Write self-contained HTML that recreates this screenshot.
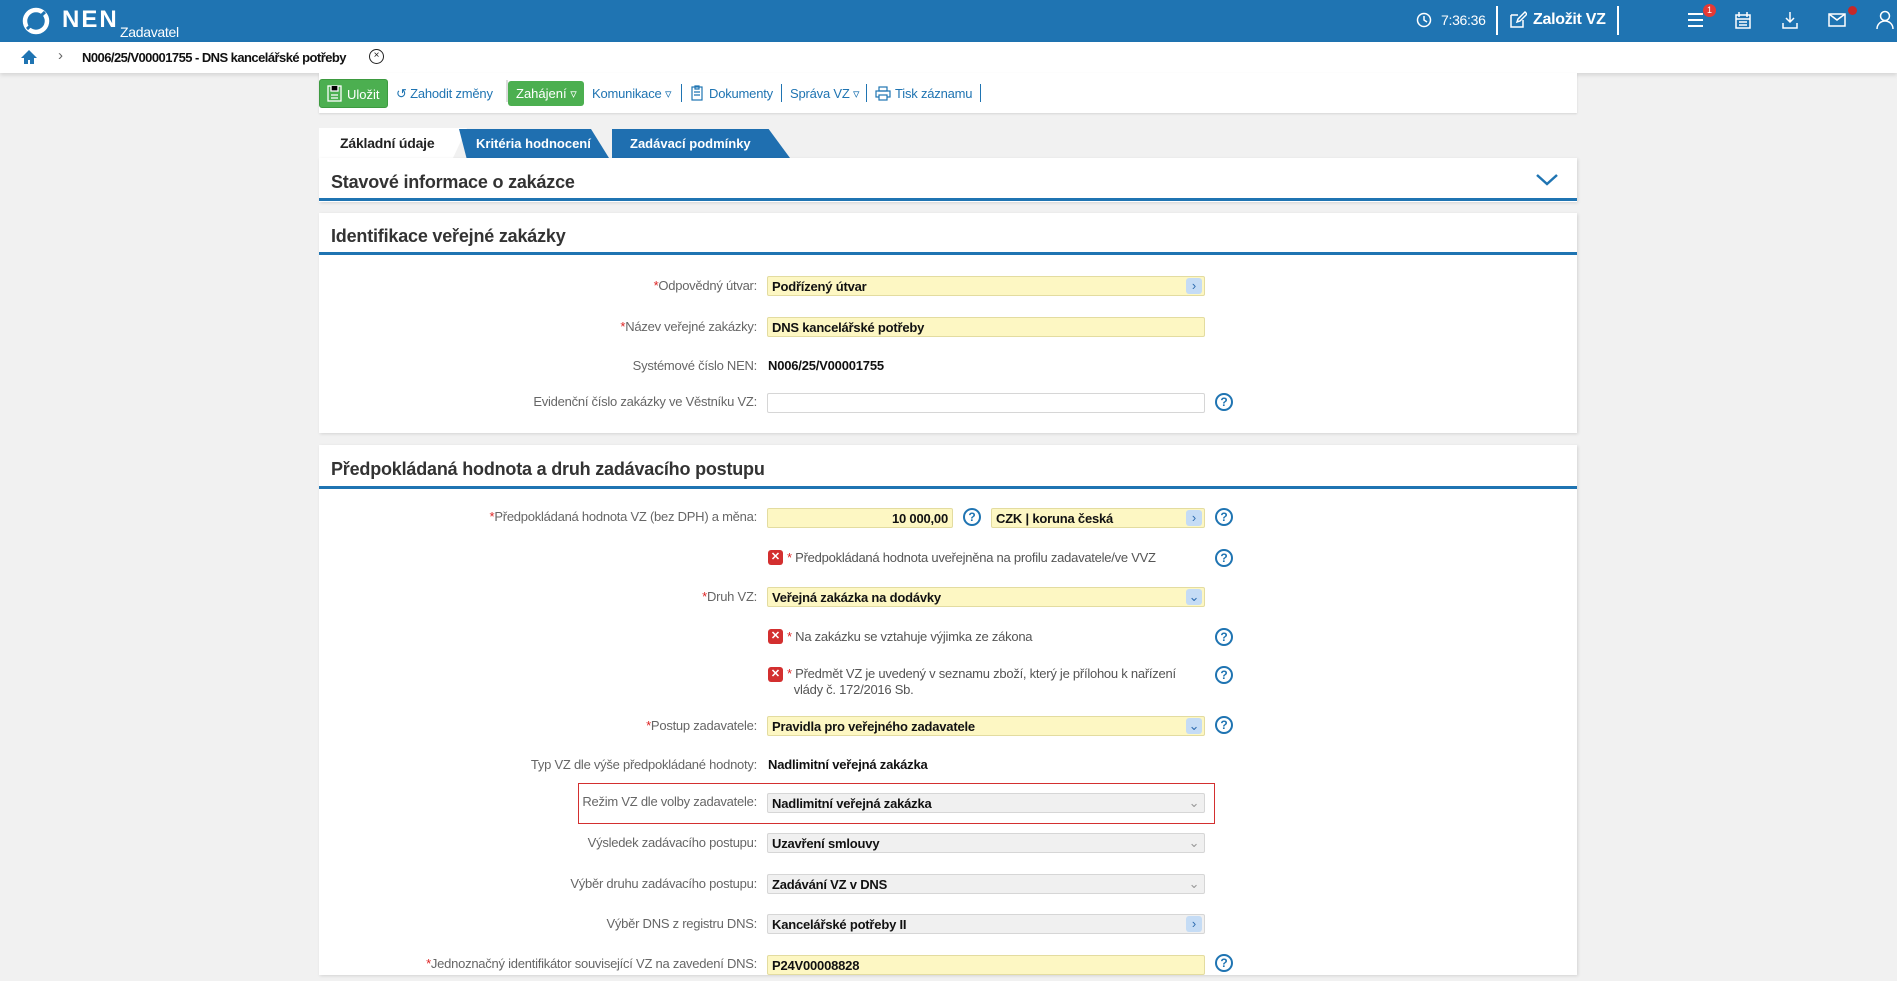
<!DOCTYPE html>
<html><head><meta charset="utf-8"><style>
*{box-sizing:border-box;margin:0;padding:0}
body{width:1897px;height:981px;overflow:hidden;background:#f1f1f1;font-family:"Liberation Sans",sans-serif;position:relative;color:#222}
.a{position:absolute}
.hdr{left:0;top:0;width:1897px;height:42px;background:#1f74b2;color:#fff}
.bc{left:0;top:42px;width:1897px;height:31px;background:#fff;box-shadow:0 2px 4px rgba(0,0,0,.12)}
.panel{background:#fff;box-shadow:1px 1px 3px rgba(0,0,0,.12);left:319px;width:1258px}
.ttl{font-size:18px;font-weight:bold;color:#333;left:12px;letter-spacing:-0.2px}
.line{left:0;width:1258px;height:3px;background:#1f74b2}
.lbl{font-size:13px;color:#666;text-align:right;width:480px;left:277px;white-space:nowrap;letter-spacing:-0.25px}
.lbl b{color:#d22;font-weight:normal}
.f{height:20px;border:1px solid #e3dca0;background:#fdf7c3;border-radius:2px;font-size:13px;font-weight:bold;padding:2px 4px;color:#111;white-space:nowrap;letter-spacing:-0.2px}
.g{background:#f0f0f0;border-color:#d6d6d6}
.w{background:#fff;border-color:#d6d6d6}
.btn{position:absolute;right:2px;top:1px;width:16px;height:16px;background:#c5dcf5;border-radius:3px;color:#2f6db0;font-size:13px;text-align:center;line-height:15px;font-weight:normal}
.btn.n{background:none;color:#999}
.q{width:18px;height:18px;border:2px solid #1f74b2;border-radius:50%;color:#1f74b2;font-size:12px;font-weight:bold;text-align:center;line-height:14px}
.x{width:15px;height:15px;background:#d32f2f;border-radius:3px;color:#fff;font-size:11px;font-weight:bold;text-align:center;line-height:15px}
.ct{font-size:13px;color:#555;letter-spacing:-0.25px}
.ct b{color:#d22;font-weight:normal}
.val{font-size:13px;font-weight:bold;color:#111;letter-spacing:-0.2px}
.tb{font-size:13px;color:#1f74b2;top:86px;letter-spacing:-0.2px}
</style></head><body>
<div class="a hdr">
 <svg class="a" style="left:22px;top:7px" width="28" height="28" viewBox="0 0 28 28"><circle cx="14" cy="14" r="11" fill="none" stroke="#fff" stroke-width="4.5"/><path d="M5 22 L23 5" stroke="#1f74b2" stroke-width="3"/></svg>
 <div class="a" style="left:62px;top:6px;font-size:24px;font-weight:bold;letter-spacing:2px">NEN</div>
 <div class="a" style="left:120px;top:24px;font-size:14px;letter-spacing:-0.3px">Zadavatel</div>
 <svg class="a" style="left:1416px;top:12px" width="16" height="16"><circle cx="8" cy="8" r="6.5" fill="none" stroke="#fff" stroke-width="1.5"/><path d="M8 4v4l3 2" stroke="#fff" fill="none" stroke-width="1.5"/></svg>
 <div class="a" style="left:1441px;top:12px;font-size:14px;letter-spacing:-0.3px">7:36:36</div>
 <div class="a" style="left:1496px;top:6px;width:2px;height:29px;background:#fff"></div>
 <svg class="a" style="left:1509px;top:11px" width="18" height="18"><path d="M2 4h7M2 4v12h12v-7M8 11l1-3 7-7 2 2-7 7z" stroke="#fff" fill="none" stroke-width="1.5"/></svg>
 <div class="a" style="left:1533px;top:11px;font-size:16px;font-weight:bold;letter-spacing:-0.3px">Založit VZ</div>
 <div class="a" style="left:1617px;top:6px;width:2px;height:29px;background:#fff"></div>
 <div class="a" style="left:1688px;top:13px;width:15px;height:2px;background:#fff;box-shadow:0 6px #fff,0 12px #fff"></div>
 <div class="a" style="left:1703px;top:4px;width:13px;height:13px;border-radius:50%;background:#e53935;font-size:9px;text-align:center;line-height:13px">1</div>
 <svg class="a" style="left:1735px;top:11px" width="16" height="18"><rect x="1" y="4" width="14" height="13" fill="none" stroke="#fff" stroke-width="1.5"/><path d="M4 1v5M12 1v5M1 8h14M4 11h8M4 14h8" stroke="#fff" stroke-width="1.5"/></svg>
 <svg class="a" style="left:1781px;top:11px" width="18" height="18"><path d="M9 1v10M5 7l4 4 4-4M2 12v5h14v-5" stroke="#fff" fill="none" stroke-width="1.5"/></svg>
 <svg class="a" style="left:1828px;top:13px" width="18" height="14"><rect x="1" y="1" width="16" height="12" fill="none" stroke="#fff" stroke-width="1.5"/><path d="M1 1l8 6 8-6" stroke="#fff" fill="none" stroke-width="1.5"/></svg>
 <div class="a" style="left:1848px;top:6px;width:9px;height:9px;border-radius:50%;background:#c62828"></div>
 <svg class="a" style="left:1876px;top:10px" width="18" height="20"><circle cx="9" cy="6" r="4.5" fill="none" stroke="#fff" stroke-width="1.5"/><path d="M1 19c0-5 4-8 8-8s8 3 8 8" stroke="#fff" fill="none" stroke-width="1.5"/></svg>
</div>
<div class="a bc">
 <svg class="a" style="left:20px;top:7px" width="18" height="16"><path d="M9 1L1 9h3v6h4v-4h2v4h4V9h3z" fill="#1f74b2"/></svg>
 <div class="a" style="left:58px;top:5px;font-size:15px;color:#666">&#x203A;</div>
 <div class="a" style="left:82px;top:8px;font-size:13px;font-weight:bold;color:#111;letter-spacing:-0.55px">N006/25/V00001755 - DNS kancelářské potřeby</div>
 <div class="a" style="left:369px;top:7px;width:15px;height:15px;border:1.5px solid #222;border-radius:50%;font-size:10px;text-align:center;line-height:12px">×</div>
</div>
<!-- toolbar -->
<div class="a" style="left:319px;top:73px;width:1258px;height:40px;background:#fff;box-shadow:0 1px 2px rgba(0,0,0,.12)"></div>
<div class="a" style="left:319px;top:79px;width:69px;height:29px;background:#4caf50;border-radius:3px;color:#fff;font-size:13px;padding:7px 0 0 27px;border:1px solid #3d9a40">Uložit</div>
<svg class="a" style="left:327px;top:85px" width="15" height="17"><rect x="1" y="1" width="13" height="15" fill="none" stroke="#fff" stroke-width="1.3"/><path d="M4 1v5h7V1M4 10h7M4 13h7" stroke="#fff" stroke-width="1.3"/></svg>
<div class="a tb" style="left:396px">&#x21BA; Zahodit změny</div>
<div class="a" style="left:506px;top:80px;width:2px;height:22px;background:#ddd"></div>
<div class="a" style="left:508px;top:81px;width:76px;height:25px;background:#4caf50;border-radius:3px;color:#fff;font-size:13px;padding:5px 0 0 8px">Zahájení ▿</div>
<div class="a tb" style="left:592px">Komunikace ▿</div>
<div class="a" style="left:681px;top:84px;width:1px;height:18px;background:#1f74b2"></div>
<svg class="a" style="left:691px;top:85px" width="12" height="16"><rect x="1" y="2" width="10" height="13" fill="none" stroke="#1f74b2" stroke-width="1.2"/><path d="M4 1h4v3H4zM3 7h6M3 10h6" stroke="#1f74b2" fill="none" stroke-width="1.2"/></svg>
<div class="a tb" style="left:709px">Dokumenty</div>
<div class="a" style="left:781px;top:84px;width:1px;height:18px;background:#1f74b2"></div>
<div class="a tb" style="left:790px">Správa VZ ▿</div>
<div class="a" style="left:866px;top:84px;width:1px;height:18px;background:#1f74b2"></div>
<svg class="a" style="left:875px;top:86px" width="16" height="15"><rect x="4" y="1" width="8" height="4" fill="none" stroke="#1f74b2" stroke-width="1.2"/><rect x="1" y="5" width="14" height="6" fill="none" stroke="#1f74b2" stroke-width="1.2"/><rect x="4" y="9" width="8" height="5" fill="#fff" stroke="#1f74b2" stroke-width="1.2"/></svg>
<div class="a tb" style="left:895px">Tisk záznamu</div>
<div class="a" style="left:980px;top:84px;width:1px;height:18px;background:#1f74b2"></div>
<!-- tabs -->
<div class="a" style="left:319px;top:128px;width:134px;height:30px;background:#fff;font-size:14px;font-weight:bold;padding:7px 0 0 21px;letter-spacing:-0.2px">Základní údaje</div>
<div class="a" style="left:453px;top:128px;width:0;height:0;border-left:14px solid #fff;border-bottom:30px solid transparent"></div>
<div class="a" style="left:459px;top:129px;width:150px;height:29px;background:#1f6fb0;clip-path:polygon(0 0,88% 0,100% 100%,5% 100%);color:#fff;font-size:13px;font-weight:bold;padding:7px 0 0 17px">Kritéria hodnocení</div>
<div class="a" style="left:612px;top:129px;width:178px;height:29px;background:#1f6fb0;clip-path:polygon(0 0,88% 0,100% 100%,0 100%);color:#fff;font-size:13px;font-weight:bold;padding:7px 0 0 18px">Zadávací podmínky</div>
<!-- panel 1 -->
<div class="a panel" style="top:158px;height:44px">
 <div class="a ttl" style="top:14px">Stavové informace o zakázce</div>
 <svg class="a" style="left:1217px;top:16px" width="22" height="12"><path d="M1 1l10 9 10-9" stroke="#1f74b2" fill="none" stroke-width="2.5"/></svg>
 <div class="a line" style="top:40px"></div>
</div>
<!-- panel 2 -->
<div class="a panel" style="top:213px;height:220px">
 <div class="a ttl" style="top:13px">Identifikace veřejné zakázky</div>
 <div class="a line" style="top:39px"></div>
</div>
<div class="a lbl" style="top:278px"><b>*</b>Odpovědný útvar:</div>
<div class="a f" style="left:767px;top:276px;width:438px">Podřízený útvar<span class="btn">&#x203A;</span></div>
<div class="a lbl" style="top:319px"><b>*</b>Název veřejné zakázky:</div>
<div class="a f" style="left:767px;top:317px;width:438px">DNS kancelářské potřeby</div>
<div class="a lbl" style="top:358px">Systémové číslo NEN:</div>
<div class="a val" style="left:768px;top:358px">N006/25/V00001755</div>
<div class="a lbl" style="top:394px">Evidenční číslo zakázky ve Věstníku VZ:</div>
<div class="a f w" style="left:767px;top:393px;width:438px"></div>
<div class="a q" style="left:1215px;top:393px">?</div>
<!-- panel 3 -->
<div class="a panel" style="top:445px;height:530px">
 <div class="a ttl" style="top:14px">Předpokládaná hodnota a druh zadávacího postupu</div>
 <div class="a line" style="top:41px"></div>
</div>
<div class="a lbl" style="top:509px"><b>*</b>Předpokládaná hodnota VZ (bez DPH) a měna:</div>
<div class="a f" style="left:767px;top:508px;width:186px;text-align:right">10 000,00</div>
<div class="a q" style="left:963px;top:508px">?</div>
<div class="a f" style="left:991px;top:508px;width:214px">CZK | koruna česká<span class="btn">&#x203A;</span></div>
<div class="a q" style="left:1215px;top:508px">?</div>
<div class="a x" style="left:768px;top:550px">✕</div>
<div class="a ct" style="left:787px;top:550px"><b>*</b> Předpokládaná hodnota uveřejněna na profilu zadavatele/ve VVZ</div>
<div class="a q" style="left:1215px;top:549px">?</div>
<div class="a lbl" style="top:589px"><b>*</b>Druh VZ:</div>
<div class="a f" style="left:767px;top:587px;width:438px">Veřejná zakázka na dodávky<span class="btn">&#x2304;</span></div>
<div class="a x" style="left:768px;top:629px">✕</div>
<div class="a ct" style="left:787px;top:629px"><b>*</b> Na zakázku se vztahuje výjimka ze zákona</div>
<div class="a q" style="left:1215px;top:628px">?</div>
<div class="a x" style="left:768px;top:667px">✕</div>
<div class="a ct" style="left:787px;top:666px;line-height:16px"><b>*</b> Předmět VZ je uvedený v seznamu zboží, který je přílohou k nařízení<br>&nbsp;&nbsp;vlády č. 172/2016 Sb.</div>
<div class="a q" style="left:1215px;top:666px">?</div>
<div class="a lbl" style="top:718px"><b>*</b>Postup zadavatele:</div>
<div class="a f" style="left:767px;top:716px;width:438px">Pravidla pro veřejného zadavatele<span class="btn">&#x2304;</span></div>
<div class="a q" style="left:1215px;top:716px">?</div>
<div class="a lbl" style="top:757px">Typ VZ dle výše předpokládané hodnoty:</div>
<div class="a val" style="left:768px;top:757px">Nadlimitní veřejná zakázka</div>
<div class="a" style="left:578px;top:783px;width:637px;height:41px;border:1px solid #d32f2f"></div>
<div class="a lbl" style="top:794px">Režim VZ dle volby zadavatele:</div>
<div class="a f g" style="left:767px;top:793px;width:438px">Nadlimitní veřejná zakázka<span class="btn n">&#x2304;</span></div>
<div class="a lbl" style="top:835px">Výsledek zadávacího postupu:</div>
<div class="a f g" style="left:767px;top:833px;width:438px">Uzavření smlouvy<span class="btn n">&#x2304;</span></div>
<div class="a lbl" style="top:876px">Výběr druhu zadávacího postupu:</div>
<div class="a f g" style="left:767px;top:874px;width:438px">Zadávání VZ v DNS<span class="btn n">&#x2304;</span></div>
<div class="a lbl" style="top:916px">Výběr DNS z registru DNS:</div>
<div class="a f g" style="left:767px;top:914px;width:438px">Kancelářské potřeby II<span class="btn">&#x203A;</span></div>
<div class="a lbl" style="top:956px"><b>*</b>Jednoznačný identifikátor související VZ na zavedení DNS:</div>
<div class="a f" style="left:767px;top:955px;width:438px">P24V00008828</div>
<div class="a q" style="left:1215px;top:954px">?</div>
</body></html>
